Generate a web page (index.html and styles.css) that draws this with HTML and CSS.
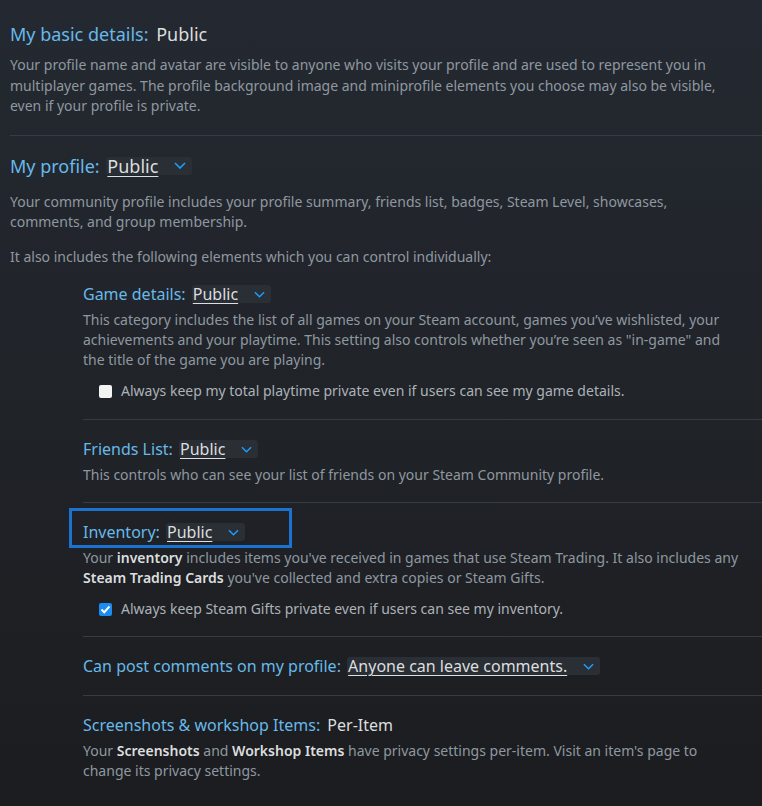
FILE: index.html
```html
<!DOCTYPE html>
<html lang="en">
<head>
  <meta charset="UTF-8">
  <title>Privacy Settings</title>
  <link rel="stylesheet" href="styles.css">
</head>
<body>
  <main class="privacy">
    <section class="group">
      <h2 class="group-title">My basic details: <span class="value">Public</span></h2>
      <p>Your profile name and avatar are visible to anyone who visits your profile and are used to represent you in multiplayer games. The profile background image and miniprofile elements you choose may also be visible, even if your profile is private.</p>
    </section>

    <section class="group">
      <h2 class="group-title with-select">My profile:
        <span class="dropdown"><span class="dropdown-label">Public</span><svg class="chevron" width="12" height="7" viewBox="0 0 12 7"><polyline points="1,1 6,6 11,1" /></svg></span>
      </h2>
      <p>Your community profile includes your profile summary, friends list, badges, Steam Level, showcases, comments, and group membership.</p>
      <p>It also includes the following elements which you can control individually:</p>

      <div class="subsettings">
        <div class="item">
          <h3 class="item-title">Game details:
            <span class="dropdown"><span class="dropdown-label">Public</span><svg class="chevron" width="11" height="7" viewBox="0 0 12 7"><polyline points="1,1 6,6 11,1" /></svg></span>
          </h3>
          <p>This category includes the list of all games on your Steam account, games you’ve wishlisted, your achievements and your playtime. This setting also controls whether you’re seen as "in-game" and the title of the game you are playing.</p>
          <label class="check"><span class="box"></span>Always keep my total playtime private even if users can see my game details.</label>
        </div>

        <div class="item">
          <h3 class="item-title">Friends List:
            <span class="dropdown"><span class="dropdown-label">Public</span><svg class="chevron" width="11" height="7" viewBox="0 0 12 7"><polyline points="1,1 6,6 11,1" /></svg></span>
          </h3>
          <p>This controls who can see your list of friends on your Steam Community profile.</p>
        </div>

        <div class="item">
          <h3 class="item-title highlighted">Inventory:
            <span class="dropdown"><span class="dropdown-label">Public</span><svg class="chevron" width="11" height="7" viewBox="0 0 12 7"><polyline points="1,1 6,6 11,1" /></svg></span>
          </h3>
          <p>Your <b>inventory</b> includes items you've received in games that use Steam Trading. It also includes any <b>Steam Trading Cards</b> you've collected and extra copies or Steam Gifts.</p>
          <label class="check"><span class="box checked"><svg width="11" height="9" viewBox="0 0 11 9"><polyline points="1.5,4.5 4.2,7.2 9.5,1.5" /></svg></span>Always keep Steam Gifts private even if users can see my inventory.</label>
        </div>

        <div class="item">
          <h3 class="item-title">Can post comments on my profile:
            <span class="dropdown"><span class="dropdown-label">Anyone can leave comments.</span><svg class="chevron" width="11" height="7" viewBox="0 0 12 7"><polyline points="1,1 6,6 11,1" /></svg></span>
          </h3>
        </div>

        <div class="item">
          <h3 class="item-title">Screenshots &amp; workshop Items: <span class="value">Per-Item</span></h3>
          <p>Your <b>Screenshots</b> and <b>Workshop Items</b> have privacy settings per-item. Visit an item's page to change its privacy settings.</p>
        </div>
      </div>
    </section>
  </main>
</body>
</html>
```

FILE: styles.css
```css
:root {
  --blue: #67b9ea;
  --text: #8f98a0;
  --light: #dcdedf;
  --line: #363c45;
}

body {
  margin: 0;
  font-family: 'Noto Sans', 'Open Sans', sans-serif;
  background: linear-gradient(to bottom, #242931 0%, #202328 50%, #1b1c1f 100%);
  color: var(--text);
  min-height: 806px;
}

.privacy {
  padding: 4px 0 20px 10px;
}

.group {
  padding: 18px 0;
}

.group + .group {
  border-top: 1px solid var(--line);
}

.group-title {
  margin: 0 0 9px;
  font-size: 18px;
  line-height: 24px;
  font-weight: normal;
  color: var(--blue);
}

.group-title.with-select {
  margin-bottom: 14px;
}

.value {
  color: var(--light);
  margin-left: 3px;
}

p {
  margin: 0 20px 0 0;
  font-size: 14px;
  line-height: 20.5px;
}

p + p {
  margin-top: 14px;
}

p b {
  color: var(--light);
  font-weight: 600;
}

.dropdown {
  display: inline-flex;
  align-items: center;
  gap: 16px;
  background: #2a2e35;
  border-radius: 3px;
  padding: 0 6px 0 1px;
  margin-left: 2px;
  height: 18px;
  color: var(--light);
}

.dropdown-label {
  text-decoration: underline;
  text-underline-offset: 3px;
  text-decoration-thickness: 1px;
}

.chevron polyline {
  fill: none;
  stroke: #1a9fff;
  stroke-width: 1.6;
}

.subsettings {
  margin-left: 73px;
}

.item {
  padding: 15px 0 17px;
}

.item:first-child {
  padding-bottom: 18px;
}

.item + .item {
  border-top: 1px solid var(--line);
  padding-top: 17px;
}

.item p {
  margin: 4px 22px 0 0;
  line-height: 20px;
}

.item-title {
  position: relative;
  margin: 0;
  font-size: 16px;
  line-height: 24px;
  font-weight: normal;
  color: var(--blue);
}

.highlighted::after {
  content: "";
  position: absolute;
  left: -14px;
  top: -12px;
  width: 217px;
  height: 34px;
  border: 3px solid #1b72cf;
}

.check {
  display: flex;
  align-items: center;
  gap: 9px;
  margin: 11px 0 0 16px;
  font-size: 14px;
  line-height: 20px;
  color: #acb2b8;
}

.box {
  width: 13px;
  height: 13px;
  border-radius: 2px;
  background: #f4f4f4;
  display: flex;
  align-items: center;
  justify-content: center;
}

.box.checked {
  background: #1a8cf2;
}

.box polyline {
  fill: none;
  stroke: #fff;
  stroke-width: 2;
}
```
